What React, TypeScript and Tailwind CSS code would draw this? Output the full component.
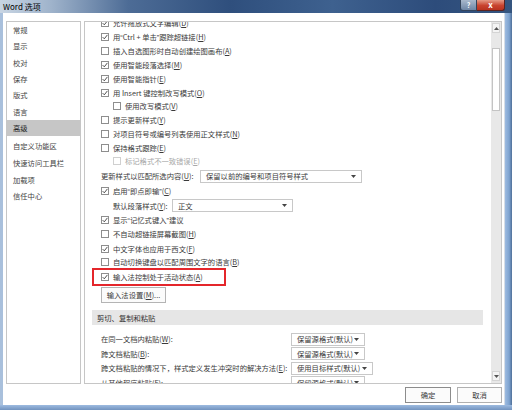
import React from 'react'

// narrow curly quotes, as in the original UI font
const Quotes = ({ text }: { text: string }) => (
  <>
    {text.split(/([“”])/).map((p, i) =>
      p === '“' || p === '”' ? (
        <span key={i} className="font-['Liberation_Sans',sans-serif]">
          {p}
        </span>
      ) : (
        <React.Fragment key={i}>{p}</React.Fragment>
      )
    )}
  </>
)

// access key marker: "&X" underlines X
const Label = ({ text }: { text: string }) => {
  const i = text.indexOf('&')
  if (i < 0) return <Quotes text={text} />
  return (
    <>
      <Quotes text={text.slice(0, i)} />
      <u className="underline-offset-1">{text[i + 1]}</u>
      {text.slice(i + 2)}
    </>
  )
}

const Box = ({ checked, disabled }: { checked?: boolean; disabled?: boolean }) => (
  <span
    className={
      'w-[8px] h-[8px] shrink-0 border bg-white flex items-center justify-center mr-[4px] ' +
      (disabled ? 'border-[#d0d0d0]' : 'border-[#8e8e8e]')
    }
  >
    {checked && (
      <svg width="6" height="6" viewBox="0 0 6 6">
        <path d="M0.6 3.1 L2.3 4.8 L5.4 0.9" fill="none" stroke="#3c3c3c" strokeWidth="0.9" />
      </svg>
    )}
  </span>
)

type RowProps = {
  label: string
  checked?: boolean
  indent?: boolean
  disabled?: boolean
  h: string
}

const CheckRow = ({ label, checked, indent, disabled, h }: RowProps) => (
  <div className={'flex items-center ' + h + ' ' + (indent ? 'pl-[28px]' : 'pl-[16px]')}>
    <Box checked={checked} disabled={disabled} />
    <span className={'whitespace-nowrap ' + (disabled ? 'text-[#a8a8a8]' : 'text-[#3a3a3a]')}>
      <Label text={label} />
    </span>
  </div>
)

const Arrow = () => (
  <svg width="5" height="3" viewBox="0 0 5 3" className="shrink-0">
    <polygon points="0,0 5,0 2.5,3" fill="#444" />
  </svg>
)

const Select = ({ value, w }: { value: string; w: string }) => (
  <div
    className={
      'h-[13px] border border-[#c8c8c8] bg-white flex items-center justify-between pl-[5px] pr-[5px] text-[#3a3a3a] whitespace-nowrap ' +
      w
    }
  >
    <span>{value}</span>
    <Arrow />
  </div>
)

const navTop = ['常规', '显示', '校对', '保存', '版式', '语言', '高级']
const navBottom = ['自定义功能区', '快速访问工具栏']
const navLast = ['加载项', '信任中心']

const pasteRows = [
  { label: '在同一文档内粘贴(&W):', value: '保留源格式(默认)', w: 'w-[74px]' },
  { label: '跨文档粘贴(&B):', value: '保留源格式(默认)', w: 'w-[74px]' },
  { label: '跨文档粘贴的情况下，样式定义发生冲突时的解决方法(&E):', value: '使用目标样式(默认)', w: 'w-[82px]' },
  { label: '从其他程序粘贴(&F):', value: '保留源格式(默认)', w: 'w-[74px]' },
]

export default function App() {
  return (
    <div className="w-[512px] h-[410px] overflow-hidden flex flex-col bg-[#7c9cc6] text-[7.3px] leading-[10px] font-['Noto_Sans_CJK_SC','Noto_Sans',sans-serif]">
      {/* title bar */}
      <div className="h-[13px] shrink-0 flex items-start bg-[linear-gradient(90deg,#c8d5e3_0%,#9fb3cb_10%,#4d6c96_25%,#2f4f7d_45%,#3e618f_65%,#2d4c7b_85%,#35557f_100%)]">
        <span className="pl-[3px] pt-[2px] text-[8px] leading-[10px] text-black">Word 选项</span>
        <div className="ml-auto mr-[7px] flex h-[11px]">
          <div className="w-[17px] h-[11px] border border-[#33445c] border-t-0 rounded-bl-[3px] bg-[linear-gradient(180deg,#a8b8cc,#6e86a6)] flex items-center justify-center text-white text-[7px] font-bold leading-none">
            ?
          </div>
          <div className="w-[28px] h-[11px] border border-[#5a2320] border-t-0 border-l-0 rounded-br-[3px] bg-[linear-gradient(180deg,#e59a86,#c8432f_55%,#b8321f)] flex items-center justify-center text-white text-[8px] font-bold leading-none">
            x
          </div>
        </div>
      </div>

      <div className="flex-1 flex min-h-0">
        <div className="w-[3px] bg-[#a9c0dc]" />
        {/* client area */}
        <div className="flex-1 bg-white flex flex-col border-r border-[#d6dde6]">
          <div className="flex gap-[3px] pl-[3px] pt-[8px] h-[371px]">
            {/* left nav */}
            <div className="w-[75px] h-[363px] border border-[#c6c6c6] bg-white text-[#444] flex flex-col">
              {navTop.map((n) => (
                <div
                  key={n}
                  className={
                    'h-[16.3px] shrink-0 flex items-center pl-[6px] ' + (n === '高级' ? 'bg-[#c6c6c6] text-[#262626]' : '')
                  }
                >
                  {n}
                </div>
              ))}
              <div className="h-[2px] shrink-0" />
              {navBottom.map((n) => (
                <div key={n} className="h-[16.6px] shrink-0 flex items-center pl-[6px]">
                  {n}
                </div>
              ))}
              {navLast.map((n) => (
                <div key={n} className="h-[16.5px] shrink-0 flex items-center pl-[6px]">
                  {n}
                </div>
              ))}
            </div>

            {/* right panel */}
            <div className="w-[418px] h-[363px] border border-[#c6c6c6] bg-white flex overflow-hidden">
              <div className="w-[406px] overflow-hidden">
                <div className="-mt-[6px] flex flex-col">
                  <CheckRow h="h-[14px]" checked label="允许拖放式文字编辑(&D)" />
                  <CheckRow h="h-[14px]" checked label="用“Ctrl + 单击”跟踪超链接(&H)" />
                  <CheckRow h="h-[14px]" label="插入自选图形时自动创建绘图画布(&A)" />
                  <CheckRow h="h-[13px]" checked label="使用智能段落选择(&M)" />
                  <CheckRow h="h-[15px]" checked label="使用智能指针(&E)" />
                  <CheckRow h="h-[13px]" checked label="用 Insert 键控制改写模式(&O)" />
                  <CheckRow h="h-[14px]" indent label="使用改写模式(&V)" />
                  <CheckRow h="h-[13px]" label="提示更新样式(&Y)" />
                  <CheckRow h="h-[15px]" label="对项目符号或编号列表使用正文样式(&N)" />
                  <CheckRow h="h-[13px]" label="保持格式跟踪(&E)" />
                  <CheckRow h="h-[14px]" indent disabled label="标记格式不一致错误(&E)" />

                  <div className="h-[16px] flex items-center pl-[16px] text-[#3a3a3a]">
                    <span className="w-[99px] whitespace-nowrap">
                      <Label text="更新样式以匹配所选内容(&U):" />
                    </span>
                    <Select value="保留以前的编号和项目符号样式" w="w-[162px]" />
                  </div>
                  <CheckRow h="h-[14px]" checked label="启用“即点即输”(&C)" />
                  <div className="h-[15px] flex items-center pl-[28px] text-[#3a3a3a]">
                    <span className="w-[59px] whitespace-nowrap">
                      <Label text="默认段落样式(&Y):" />
                    </span>
                    <Select value="正文" w="w-[121px]" />
                  </div>
                  <CheckRow h="h-[14px]" checked label="显示“记忆式键入”建议" />
                  <CheckRow h="h-[13px]" label="不自动超链接屏幕截图(&H)" />
                  <div className="h-[2px]" />
                  <CheckRow h="h-[14px]" checked label="中文字体也应用于西文(&F)" />
                  <CheckRow h="h-[12px]" label="自动切换键盘以匹配周围文字的语言(&B)" />

                  <div className="ml-[7px] w-[134px] h-[18px] border-2 border-[#e4262b] flex items-center pl-[7px]">
                    <Box checked />
                    <span className="whitespace-nowrap text-[#3a3a3a]">
                      <Label text="输入法控制处于活动状态(&A)" />
                    </span>
                  </div>

                  <div className="h-[16px] ml-[16px] mt-[1px] w-[65px] border border-[#b4b4b4] bg-[#fbfbfb] flex items-center justify-center text-[#3a3a3a] whitespace-nowrap">
                    <Label text="输入法设置(&M)..." />
                  </div>

                  <div className="h-[15px] mt-[7px] ml-[7px] mr-[8px] bg-[#e6e6e6] flex items-center pl-[5px] text-[#333]">
                    剪切、复制和粘贴
                  </div>

                  <div className="mt-[7px] flex flex-col">
                    {pasteRows.map((r) => (
                      <div key={r.label} className="h-[14.5px] grid grid-cols-[190px_auto] items-center pl-[16px] text-[#3a3a3a]">
                        <span className="whitespace-nowrap">
                          <Label text={r.label} />
                        </span>
                        <Select value={r.value} w={r.w} />
                      </div>
                    ))}
                  </div>
                </div>
              </div>

              {/* scrollbar */}
              <div className="w-[10px] bg-[#e8e8e8] flex flex-col items-stretch">
                <div className="h-[10px] mt-[1px] mx-[1px] bg-[#f4f4f4] border border-[#d4d4d4] flex items-center justify-center">
                  <svg width="5" height="3" viewBox="0 0 5 3">
                    <polygon points="0,3 5,3 2.5,0" fill="#555" />
                  </svg>
                </div>
                <div className="h-[63px] mt-[15px] mx-[1px] bg-white border border-[#c4c4c4]" />
                <div className="flex-1" />
                <div className="h-[10px] mb-[2px] mx-[1px] bg-[#f4f4f4] border border-[#d4d4d4] flex items-center justify-center">
                  <svg width="5" height="3" viewBox="0 0 5 3">
                    <polygon points="0,0 5,0 2.5,3" fill="#555" />
                  </svg>
                </div>
              </div>
            </div>
          </div>

          {/* buttons */}
          <div className="flex-1 flex justify-end items-start pt-[3px] pr-[2px] gap-[6px] text-[#3a3a3a]">
            <div className="w-[46px] h-[16px] border border-[#8c8c8c] bg-[#fbfbfb] flex items-center justify-center">确定</div>
            <div className="w-[45px] h-[16px] border border-[#b0b0b0] bg-[#fbfbfb] flex items-center justify-center">取消</div>
          </div>
        </div>
        <div className="w-[7px] bg-[linear-gradient(90deg,#9dbbe0,#7ea3d0_60%,#4f6f98)]" />
      </div>
      <div className="h-[5px] shrink-0 bg-[linear-gradient(180deg,#9dbbe0,#7293bf)]" />
    </div>
  )
}
